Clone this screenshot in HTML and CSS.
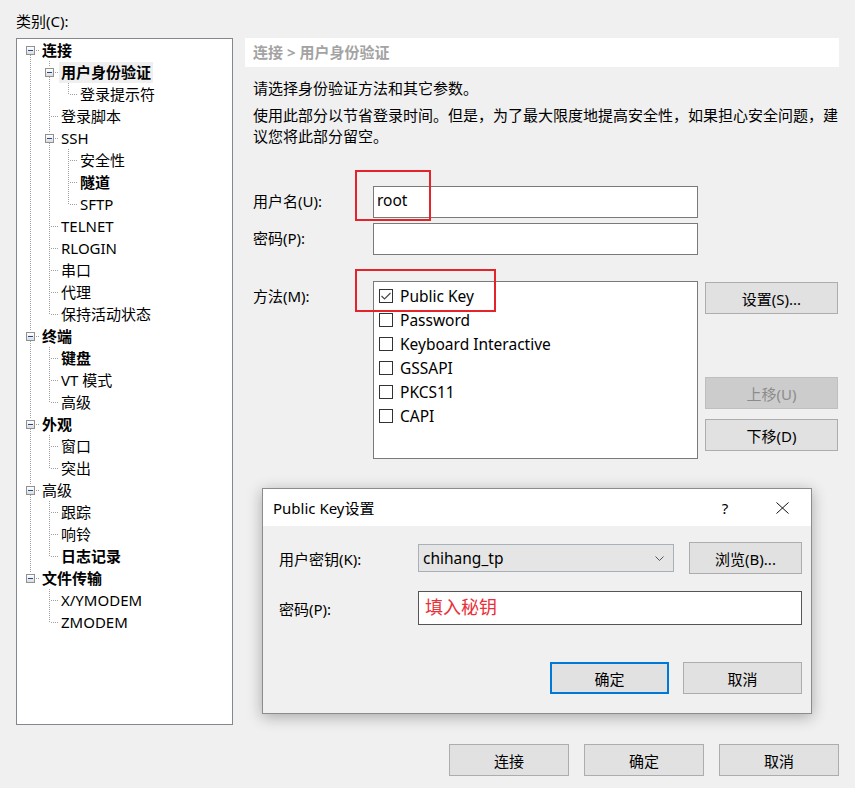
FILE: index.html
```html
<!DOCTYPE html>
<html lang="zh-CN">
<head>
<meta charset="utf-8">
<title>会话属性</title>
<link rel="stylesheet" href="styles.css">
</head>
<body>
<div class="win">
  <div class="main">
    <div class="left">
      <div class="cat">类别(C):</div>
      <div class="tree">
        <div class="row"><span class="c bx first"><i class="box"></i></span><span class="lb b">连接</span></div>
        <div class="row"><span class="c v"></span><span class="c bx"><i class="box"></i></span><span class="lb b sel">用户身份验证</span></div>
        <div class="row"><span class="c v"></span><span class="c v"></span><span class="c l"></span><span class="lb">登录提示符</span></div>
        <div class="row"><span class="c v"></span><span class="c t"></span><span class="lb">登录脚本</span></div>
        <div class="row"><span class="c v"></span><span class="c bx"><i class="box"></i></span><span class="lb">SSH</span></div>
        <div class="row"><span class="c v"></span><span class="c v"></span><span class="c t"></span><span class="lb">安全性</span></div>
        <div class="row"><span class="c v"></span><span class="c v"></span><span class="c t"></span><span class="lb b">隧道</span></div>
        <div class="row"><span class="c v"></span><span class="c v"></span><span class="c l"></span><span class="lb">SFTP</span></div>
        <div class="row"><span class="c v"></span><span class="c t"></span><span class="lb">TELNET</span></div>
        <div class="row"><span class="c v"></span><span class="c t"></span><span class="lb">RLOGIN</span></div>
        <div class="row"><span class="c v"></span><span class="c t"></span><span class="lb">串口</span></div>
        <div class="row"><span class="c v"></span><span class="c t"></span><span class="lb">代理</span></div>
        <div class="row"><span class="c v"></span><span class="c l"></span><span class="lb">保持活动状态</span></div>
        <div class="row"><span class="c bx"><i class="box"></i></span><span class="lb b">终端</span></div>
        <div class="row"><span class="c v"></span><span class="c t"></span><span class="lb b">键盘</span></div>
        <div class="row"><span class="c v"></span><span class="c t"></span><span class="lb">VT 模式</span></div>
        <div class="row"><span class="c v"></span><span class="c l"></span><span class="lb">高级</span></div>
        <div class="row"><span class="c bx"><i class="box"></i></span><span class="lb b">外观</span></div>
        <div class="row"><span class="c v"></span><span class="c t"></span><span class="lb">窗口</span></div>
        <div class="row"><span class="c v"></span><span class="c l"></span><span class="lb">突出</span></div>
        <div class="row"><span class="c bx"><i class="box"></i></span><span class="lb">高级</span></div>
        <div class="row"><span class="c v"></span><span class="c t"></span><span class="lb">跟踪</span></div>
        <div class="row"><span class="c v"></span><span class="c t"></span><span class="lb">响铃</span></div>
        <div class="row"><span class="c v"></span><span class="c l"></span><span class="lb b">日志记录</span></div>
        <div class="row"><span class="c bx last"><i class="box"></i></span><span class="lb b">文件传输</span></div>
        <div class="row"><span class="c"></span><span class="c t"></span><span class="lb">X/YMODEM</span></div>
        <div class="row"><span class="c"></span><span class="c l"></span><span class="lb">ZMODEM</span></div>
      </div>
    </div>
    <div class="right">
      <div class="crumb">连接 &gt; 用户身份验证</div>
      <p class="p1">请选择身份验证方法和其它参数。</p>
      <p class="p2">使用此部分以节省登录时间。但是，为了最大限度地提高安全性，如果担心安全问题，建<br>议您将此部分留空。</p>
      <div class="frow r-user"><span class="flabel">用户名(U):</span><div class="field">root</div></div>
      <div class="frow r-pass"><span class="flabel">密码(P):</span><div class="field"></div></div>
      <div class="frow r-method">
        <span class="flabel top">方法(M):</span>
        <div class="list">
          <div class="item"><span class="chk"><svg width="12" height="12" viewBox="0 0 12 12"><polyline points="1.5,6 4.5,9 10.5,3" fill="none" stroke="#4a4a4a" stroke-width="1.2"/></svg></span>Public Key</div>
          <div class="item"><span class="chk"></span>Password</div>
          <div class="item"><span class="chk"></span>Keyboard Interactive</div>
          <div class="item"><span class="chk"></span>GSSAPI</div>
          <div class="item"><span class="chk"></span>PKCS11</div>
          <div class="item"><span class="chk"></span>CAPI</div>
        </div>
        <div class="side">
          <button class="btn b-set">设置(S)...</button>
          <button class="btn dis b-up">上移(U)</button>
          <button class="btn b-down">下移(D)</button>
        </div>
      </div>
    </div>
  </div>
  <div class="footer">
    <button class="btn fbtn">连接</button>
    <button class="btn fbtn">确定</button>
    <button class="btn fbtn">取消</button>
  </div>
</div>

<div class="mark m1"></div>
<div class="mark m2"></div>

<div class="dlg">
  <div class="dtitle">
    <span class="dname">Public Key设置</span>
    <span class="qm">?</span>
    <svg class="xicon" width="13" height="12" viewBox="0 0 13 12"><path d="M0.5 0.5 L12.5 11.5 M12.5 0.5 L0.5 11.5" stroke="#111" stroke-width="1" fill="none"/></svg>
  </div>
  <div class="dbody">
    <div class="drow">
      <span class="dlabel">用户密钥(K):</span>
      <div class="combo"><span class="ctext">chihang_tp</span><svg width="9" height="5" viewBox="0 0 9 5"><polyline points="0.5,0.5 4.5,4.5 8.5,0.5" fill="none" stroke="#555" stroke-width="1"/></svg></div>
      <button class="btn browse">浏览(B)...</button>
    </div>
    <div class="drow r2">
      <span class="dlabel">密码(P):</span>
      <div class="dfield">填入秘钥</div>
    </div>
    <div class="dbtns">
      <button class="btn dbtn ok">确定</button>
      <button class="btn dbtn">取消</button>
    </div>
  </div>
</div>
</body>
</html>
```

FILE: styles.css
```css
:root {
  --vd: repeating-linear-gradient(to bottom, #a0a0a0 0 1px, transparent 1px 2px);
  --hd: repeating-linear-gradient(to right, #a0a0a0 0 1px, transparent 1px 2px);
}
* { box-sizing: border-box; }
html, body { margin: 0; padding: 0; }
body {
  width: 855px;
  height: 788px;
  background: #f0f0f0;
  font-family: "Noto Sans", "Noto Sans CJK SC", sans-serif;
  font-size: 15px;
  color: #000;
  position: relative;
  overflow: hidden;
}
.win { padding: 10px 16px 0 16px; }
.main { display: flex; gap: 12px; }
.left { width: 217px; flex: none; }
.cat { height: 28px; line-height: 22px; }
.tree {
  height: 687px;
  background: #fff;
  border: 1px solid #828790;
  padding-left: 4px;
}
.row { display: flex; height: 22px; }
.c { width: 19px; height: 22px; flex: none; }
.v { background: var(--vd) 9px 0 / 1px 100% no-repeat; }
.t {
  background-image: var(--vd), var(--hd);
  background-position: 9px 0, 11px 11px;
  background-size: 1px 100%, 8px 1px;
  background-repeat: no-repeat;
}
.l {
  background-image: var(--vd), var(--hd);
  background-position: 9px 0, 11px 11px;
  background-size: 1px 12px, 8px 1px;
  background-repeat: no-repeat;
}
.bx {
  padding-top: 7px;
  background-image: var(--vd), var(--vd), var(--hd);
  background-position: 9px 0, 9px 16px, 15px 11px;
  background-size: 1px 6px, 1px 6px, 4px 1px;
  background-repeat: no-repeat;
}
.bx.first {
  background-image: var(--vd), var(--hd);
  background-position: 9px 16px, 15px 11px;
  background-size: 1px 6px, 4px 1px;
}
.bx.last {
  background-image: var(--vd), var(--hd);
  background-position: 9px 0, 15px 11px;
  background-size: 1px 6px, 4px 1px;
}
.box {
  display: flex;
  align-items: center;
  justify-content: center;
  margin-left: 5px;
  width: 9px;
  height: 9px;
  border: 1px solid #919191;
  background: linear-gradient(#ffffff, #dcdcdc);
}
.box::after {
  content: "";
  width: 5px;
  height: 1px;
  background: #1d4c96;
}
.lb {
  margin-top: 1px;
  height: 21px;
  line-height: 21px;
  padding: 0 2px;
  white-space: nowrap;
}
.lb.b { font-weight: bold; }
.lb.sel { background: #efefef; }

.right { width: 594px; margin-top: 28px; }
.crumb {
  height: 29px;
  line-height: 29px;
  background: #fff;
  padding-left: 8px;
  color: #a3a3a3;
  font-weight: bold;
}
.p1, .p2 { margin: 0; padding-left: 8px; line-height: 21px; }
.p1 { margin-top: 11px; }
.p2 { margin-top: 6px; white-space: nowrap; }
.frow { display: flex; padding-left: 8px; }
.r-user { margin-top: 39px; }
.r-pass { margin-top: 5px; }
.r-method { margin-top: 26px; }
.flabel { width: 120px; flex: none; line-height: 31px; }
.flabel.top { line-height: 21px; margin-top: 5px; }
.field {
  width: 325px;
  height: 32px;
  border: 1px solid #7a7a7a;
  background: #fff;
  padding-left: 3px;
  line-height: 27px;
  font-size: 15.5px;
}
.list {
  width: 325px;
  height: 178px;
  border: 1px solid #7a7a7a;
  background: #fff;
  padding-top: 2px;
}
.item {
  display: flex;
  align-items: center;
  height: 24px;
  padding-left: 5px;
  font-size: 15.5px;
}
.chk {
  width: 14px;
  height: 14px;
  border: 1px solid #333;
  background: #fff;
  margin-right: 7px;
  display: flex;
  align-items: center;
  justify-content: center;
}
.side { width: 133px; margin-left: 7px; display: flex; flex-direction: column; }
.btn {
  font-family: inherit;
  font-size: 15px;
  color: #000;
  background: #e1e1e1;
  border: 1px solid #adadad;
  padding: 0;
  height: 32px;
}
.b-set { margin-top: 1px; }
.b-up { margin-top: 63px; }
.b-down { margin-top: 10px; }
.btn.dis { background: #cccccc; border-color: #bfbfbf; color: #8c8c8c; }
.footer {
  display: flex;
  justify-content: flex-end;
  gap: 15px;
  margin-top: 19px;
}
.fbtn { width: 120px; }

.mark {
  position: absolute;
  border: 2px solid #e3242b;
}
.m1 { left: 355px; top: 170px; width: 76px; height: 51px; }
.m2 { left: 355px; top: 269px; width: 141px; height: 43px; }

.dlg {
  position: absolute;
  left: 262px;
  top: 488px;
  width: 550px;
  height: 226px;
  border: 1px solid #8c8c8c;
  background: #f0f0f0;
  box-shadow: 0 3px 14px rgba(0, 0, 0, 0.3);
}
.dtitle {
  height: 37px;
  background: #fff;
  display: flex;
  align-items: center;
  padding-left: 10px;
}
.dname { flex: 1; }
.qm { width: 10px; text-align: center; margin-right: 46px; font-size: 15px; }
.xicon { margin-right: 22px; }
.dbody { padding: 16px 9px 0 16px; }
.drow { display: flex; align-items: center; height: 32px; }
.drow.r2 { margin-top: 17px; height: 34px; }
.dlabel { width: 139px; flex: none; }
.combo {
  width: 256px;
  height: 28px;
  background: #e5e5e5;
  border: 1px solid #a8b0b8;
  display: flex;
  align-items: center;
  justify-content: space-between;
  padding: 0 9px 0 4px;
  font-size: 15.5px;
}
.browse { width: 113px; margin-left: 15px; }
.dfield {
  width: 384px;
  height: 34px;
  border: 1px solid #555;
  background: #fff;
  padding-left: 6px;
  color: #e8313a;
  font-size: 18px;
  line-height: 31px;
}
.dbtns {
  display: flex;
  justify-content: flex-end;
  gap: 14px;
  margin-top: 37px;
}
.dbtn { width: 119px; }
.dbtn.ok { border: 2px solid #0078d7; }
```
